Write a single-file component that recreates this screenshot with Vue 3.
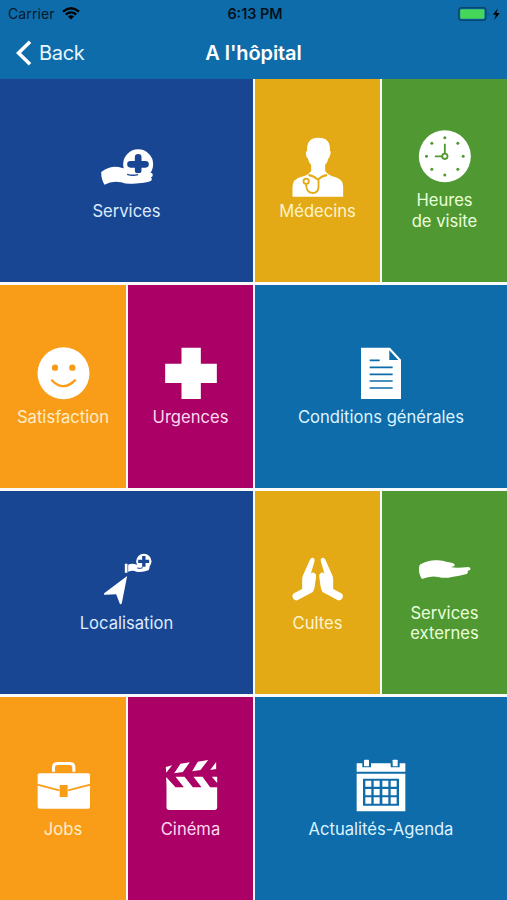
<script setup>
const tiles = [
  { id: 'services', lines: ['Services'], tone: 'navy', wide: true, box: '61.5 17 156 156' },
  { id: 'doctors', lines: ['Médecins'], tone: 'gold', box: '64.5 47 156 156' },
  { id: 'hours', lines: ['Heures', 'de visite'], tone: 'green', box: '445.5 16 156 156' },
  { id: 'smile', lines: ['Satisfaction'], tone: 'orange', box: '111 35 156 156' },
  { id: 'emergency', lines: ['Urgences'], tone: 'magenta', box: '493.5 35 156 156' },
  { id: 'terms', lines: ['Conditions générales'], tone: 'blue', wide: true, box: '195 35 156 156' },
  { id: 'location', lines: ['Localisation'], tone: 'navy', wide: true, box: '91.5 39 156 156' },
  { id: 'worship', lines: ['Cultes'], tone: 'gold', box: '64.5 24 156 156' },
  { id: 'external', lines: ['Services', 'externes'], tone: 'green', box: '445.5 -7 156 156' },
  { id: 'jobs', lines: ['Jobs'], tone: 'orange', box: '111 42 156 156' },
  { id: 'cinema', lines: ['Cinéma'], tone: 'magenta', box: '493.5 42 156 156' },
  { id: 'agenda', lines: ['Actualités-Agenda'], tone: 'blue', wide: true, box: '195 42 156 156' },
]
</script>

<template>
  <div class="screen">
    <header class="top">
      <div class="status">
        <div class="carrier">
          <span>Carrier</span>
          <svg class="wifi" viewBox="0 0 18 13">
            <path d="M1 4.6Q9-2.2 17 4.6M3.8 7.5Q9 3.2 14.2 7.5" fill="none" stroke="currentColor" stroke-width="2.3" />
            <path d="M5.9 9.4Q9 6.9 12.1 9.4L9 12.6Z" fill="currentColor" />
          </svg>
        </div>
        <span class="time">6:13 PM</span>
        <svg class="battery" viewBox="0 0 44 14">
          <rect x=".8" y=".8" width="27" height="12.4" rx="2.4" fill="none" stroke="#07466f" stroke-width="1.4" />
          <rect x="2.2" y="2.2" width="24.2" height="9.6" rx="1" fill="#46d659" />
          <path d="M29.8 5q1.6 2 0 4z" fill="#07466f" />
          <path d="M40 1.2L34.8 7.7h3.1l-1.6 5.3 5.4-7h-3.4z" fill="#000" />
        </svg>
      </div>
      <nav class="nav">
        <div class="back">
          <svg class="chevron" viewBox="0 0 16 26"><path d="M14 1.8L2.5 13 14 24.2" fill="none" stroke="currentColor" stroke-width="3.6" /></svg>
          <span>Back</span>
        </div>
        <h1 class="title">A l'hôpital</h1>
      </nav>
    </header>

    <main class="grid">
      <section v-for="t in tiles" :key="t.id" class="tile" :class="[t.tone, { wide: t.wide }]">
        <svg class="icon" :viewBox="t.box">
          <template v-if="t.id === 'services'">
            <circle cx="173" cy="87" r="45" />
            <path class="cut" d="M163 77V66q0-10 10-10t10 10v11h12q10 0 10 10t-10 10h-12v8q0 10-10 10t-10-10V97h-13q-10 0-10-10t10-10z" />
            <path d="M62 110Q73 101 86 97Q105 91 125 98L146 101Q160 106 165 114L205 112Q216 111 217 118Q217 124 211 126Q217 132 211 137Q195 144 158 145Q138 147 122 141Q95 135 72 148Q62 132 62 110Z" />
            <path class="line thin" d="M140 117Q155 122 173 118" />
          </template>

          <template v-else-if="t.id === 'doctors'">
            <path d="M110 76Q107 37 144 37Q181 37 178 76Q183 78 178 91Q177 97 174 99Q171 113 164 119V137Q173 150 193 155Q218 162 218 184V214H66V184Q66 162 91 155Q113 150 122 137V119Q114 112 112 99Q107 96 106 86Q105 78 110 76Z" />
            <path class="line mid" d="M114 149Q129 151 142 163Q155 151 170 149M144 162V184Q144 203 126 203Q107 203 107 177" />
            <circle class="line mid hollow" cx="107" cy="168" r="8" />
          </template>

          <template v-else-if="t.id === 'hours'">
            <circle cx="523" cy="95" r="78" />
            <path class="line mid" d="M523 57v30M493 95h22" />
            <circle class="line mid hollow" cx="523" cy="95" r="8" />
            <g class="cut">
              <circle cx="523" cy="39" r="4.5" /><circle cx="562" cy="56" r="4.5" />
              <circle cx="578" cy="95" r="4.5" /><circle cx="562" cy="134" r="4.5" />
              <circle cx="523" cy="151" r="4.5" /><circle cx="484" cy="134" r="4.5" />
              <circle cx="468" cy="95" r="4.5" /><circle cx="484" cy="56" r="4.5" />
            </g>
          </template>

          <template v-else-if="t.id === 'smile'">
            <circle cx="190.5" cy="114" r="78" />
            <circle class="cut" cx="165" cy="97" r="9.5" /><circle class="cut" cx="217" cy="97" r="9.5" />
            <path class="line smile" d="M154 133Q190 172 227 133" />
          </template>

          <path v-else-if="t.id === 'emergency'" d="M543 37h58v48h48v58h-48v48h-58v-48h-49V85h49z" />

          <template v-else-if="t.id === 'terms'">
            <path d="M213 37h87l33 36v118H213z" />
            <path class="cut" d="M298 45v29h27z" />
            <path class="line doc" d="M239 75h30M239 96h69M239 117h69M239 137h69M239 158h69" />
          </template>

          <template v-else-if="t.id === 'location'">
            <path d="M170 108L101 160Q98 166 106 164L137 163L148 191Q151 196 154 189Z" />
            <circle cx="220" cy="64" r="23" />
            <path class="cut" d="M215 59V48h10v11h11v10h-11v11h-10V69h-12V59z" />
            <path d="M163 71h8v27h-8zM173 74Q185 68 201 75Q211 77 212 83L237 79Q239 83 234 91Q215 98 198 95Q187 90 173 95Z" />
            <path class="line fine" d="M200 84Q209 87 217 83" />
          </template>

          <template v-else-if="t.id === 'worship'">
            <path d="M119 43Q123 36 129 39Q134 42 132 49L121 86Q125 82 131 83Q138 86 137 94L133 122Q132 133 127 141L82 165Q73 169 67 159Q63 148 72 144L95 132V105Q95 98 97 92Z" />
            <path d="M164 43Q160 36 154 39Q149 42 151 49L162 86Q158 82 152 83Q145 86 146 94L150 122Q151 133 156 141L201 165Q210 169 216 159Q220 148 211 144L188 132V105Q188 98 186 92Z" />
          </template>

          <path v-else-if="t.id === 'external'" d="M450 57Q473 45 494 45Q513 43 530 50Q552 52 553 59Q552 64 540 65Q557 69 594 65Q601 66 600 72Q599 76 591 77Q595 82 588 86Q567 92 544 95Q525 100 503 95Q481 90 454 101Q443 84 446 62Z" />

          <template v-else-if="t.id === 'jobs'">
            <path d="M156 80V67Q156 51 172 51H210Q226 51 226 67V80H217V68Q217 60 209 60H173Q165 60 165 68V80Z" />
            <rect x="113" y="85" width="157" height="106" rx="6" />
            <path class="line mid" d="M112 119L178 136M204 136L271 119" />
            <path class="cut" d="M179 120h24v36h-24z" />
          </template>

          <template v-else-if="t.id === 'cinema'">
            <path d="M497 96L525 127H550L525 95H552L577 127H603L579 95H606L629 127H650V187Q650 195 642 195H506Q498 195 498 187V126Z" />
            <path d="M496 66L515 61L497 83ZM540 56L568 52L547 81L521 85ZM592 50L623 45L600 75L575 79ZM647 51V72L629 75Z" />
            <path d="M634 95H650V114Z" />
          </template>

          <template v-else>
            <path d="M200 55h17v12h26V55h59v12h27V55h17v25H200zM200 86h146v113H200z" />
            <rect x="222" y="44" width="15" height="20" rx="2" /><rect x="308" y="44" width="15" height="20" rx="2" />
            <path class="cut" d="M219 101h108v81H219z" />
            <path d="M226 107h18v18h-18zM251 107h18v18h-18zM277 107h18v18h-18zM302 107h18v18h-18zM226 132h18v19h-18zM251 132h18v19h-18zM277 132h18v19h-18zM302 132h18v19h-18zM226 157h18v19h-18zM251 157h18v19h-18zM277 157h18v19h-18zM302 157h18v19h-18z" />
          </template>
        </svg>
        <div class="label"><span v-for="l in t.lines" :key="l">{{ l }}</span></div>
      </section>
    </main>
  </div>
</template>

<style>
body { margin: 0; background: #fff; }
</style>

<style scoped>
.screen { width: 507px; height: 900px; display: flex; flex-direction: column; overflow: hidden; background: #fafafa; font-family: Inter, "Liberation Sans", sans-serif; }
.top { height: 79px; flex: none; background: #0e6caa; }
.status { height: 27px; box-sizing: border-box; padding: 0 5px 0 8px; display: grid; grid-template-columns: 1fr auto 1fr; align-items: center; color: #06192a; font-size: 14px; }
.carrier { display: flex; align-items: center; gap: 7px; letter-spacing: .1px; }
.wifi { width: 18px; height: 13px; color: #000; }
.time { font-weight: 600; font-size: 14.4px; color: #03111d; }
.battery { width: 44px; height: 14px; justify-self: end; }
.nav { height: 52px; display: grid; grid-template-columns: 1fr auto 1fr; align-items: center; color: #fff; }
.back { display: flex; align-items: center; gap: 7px; padding-left: 16px; font-size: 20px; color: #e8f6ff; letter-spacing: -.3px; }
.chevron { width: 16px; height: 26px; color: #fff; }
.title { margin: 0; font-size: 20px; font-weight: 600; letter-spacing: -.1px; }
.grid { flex: 1; display: grid; grid-template-columns: 126px 125px 125px 125px; grid-template-rows: repeat(4, minmax(0, 1fr)); gap: 3.67px 2px; }
.tile { --tone: #194693; --text: #e4eeff; background: var(--tone); display: flex; flex-direction: column; align-items: center; justify-content: center; gap: 8px; }
.wide { grid-column: span 2; }
.navy { --tone: #194693; --text: #dceaff; }
.gold { --tone: #e3aa15; --text: #fff3cf; }
.green { --tone: #509932; --text: #e9ffdc; }
.orange { --tone: #f99d18; --text: #ffedc9; }
.magenta { --tone: #ab0066; --text: #ffd9f0; }
.blue { --tone: #0e6caa; --text: #dcf3ff; }
.icon { width: 52px; height: 52px; overflow: visible; fill: #fff; }
.cut { fill: var(--tone); }
.line { fill: none; stroke: var(--tone); }
.line.hollow { fill: #fff; }
.thin { stroke-width: 4; }
.fine { stroke-width: 3; }
.mid { stroke-width: 5.5; }
.doc { stroke-width: 5; }
.smile { stroke-width: 7; }
.label { display: flex; flex-direction: column; align-items: center; margin-bottom: -1px; font-size: 16.6px; line-height: 20.5px; color: var(--text); white-space: nowrap; }
</style>
